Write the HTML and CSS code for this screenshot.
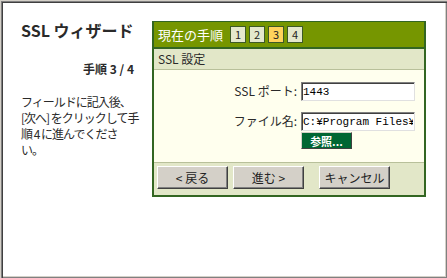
FILE: index.html
```html
<!DOCTYPE html>
<html lang="ja">
<head>
    <meta charset="UTF-8">
    <title>SSL ウィザード</title>
    <link rel="stylesheet" href="styles.css">
</head>
<body>
    <div class="frame">
        <div class="wizard">
            <div class="side">
                <h1>SSL ウィザード</h1>
                <p class="step-count">手順 3 / 4</p>
                <p class="hint">フィールドに記入後、<br>[次へ] をクリックして手<br>順 4 に進んでくださ<br>い。</p>
            </div>

            <div class="panel">
                <div class="panel-head">
                    <span class="head-title">現在の手順</span>
                    <span class="step">1</span>
                    <span class="step">2</span>
                    <span class="step current">3</span>
                    <span class="step">4</span>
                </div>
                <div class="panel-sub">SSL 設定</div>
                <div class="panel-body">
                    <div class="field">
                        <label for="port">SSL ポート:</label>
                        <input type="text" id="port" value="1443">
                    </div>
                    <div class="field">
                        <label for="file">ファイル名:</label>
                        <div class="file-col">
                            <input type="text" id="file" value="C:¥Program Files¥Apache">
                            <button class="browse" type="button">参照...</button>
                        </div>
                    </div>
                </div>
                <div class="panel-foot">
                    <button class="btn" type="button">&lt; 戻る</button>
                    <button class="btn" type="button">進む &gt;</button>
                    <button class="btn cancel" type="button">キャンセル</button>
                </div>
            </div>
        </div>
    </div>
</body>
</html>
```

FILE: styles.css
```css
html, body {
    margin: 0;
    padding: 0;
}

body {
    font-family: "Noto Sans CJK JP", "DejaVu Sans", sans-serif;
    font-size: 12px;
    color: #2a2a2a;
    background-color: #d4d0c8;
}

.frame {
    width: 447px;
    height: 278px;
    box-sizing: border-box;
    border-top: 1px solid #d4d0c8;
    border-left: 1px solid #d4d0c8;
    background-color: #fff;
    box-shadow: inset 1px 1px 0 #808080, inset 2px 2px 0 #404040, inset -1px -1px 0 #808080, inset -2px -2px 0 #d4d0c8, inset -3px -3px 0 #fff;
    padding: 20px 0 0 19px;
}

.wizard {
    display: flex;
    align-items: flex-start;
}

.side {
    width: 114px;
    margin-right: 18px;
}

h1 {
    font-size: 16px;
    font-weight: bold;
    margin: 0 0 0 1px;
    line-height: 18px;
    color: #2a2a2a;
}

.step-count {
    text-align: right;
    font-weight: bold;
    margin: 22px 0 0;
    line-height: 16px;
}

.hint {
    margin: 17px 0 0 1px;
    line-height: 16px;
    letter-spacing: -1px;
    white-space: nowrap;
}

.panel {
    width: 274px;
    border: 2px solid #336622;
    border-top-width: 1px;
    box-sizing: border-box;
}

.panel-head {
    background-color: #769600;
    height: 25px;
    display: flex;
    align-items: center;
    padding-left: 4px;
    border-bottom: 2px solid #336622;
}

.head-title {
    color: #fff;
    font-size: 13px;
    margin-right: 7px;
}

.step {
    width: 14px;
    height: 15px;
    line-height: 15px;
    text-align: center;
    font-size: 11px;
    background-color: #e4e8cc;
    border: 1px solid #3c5a28;
    margin-right: 3px;
    color: #222;
}

.step.current {
    background-color: #ffd35c;
}

.panel-sub {
    background-color: #e2e7c8;
    height: 20px;
    line-height: 20px;
    padding-left: 4px;
    font-size: 12px;
    border-bottom: 1px solid #b8c09a;
}

.panel-body {
    background-color: #ffffee;
    padding: 12px 8px 13px 0;
    display: flex;
    flex-direction: column;
    gap: 11px;
}

.field {
    display: flex;
    align-items: flex-start;
}

.field label {
    width: 143px;
    text-align: right;
    padding-right: 4px;
    line-height: 18px;
}

.file-col {
    display: flex;
    flex-direction: column;
}

input[type="text"] {
    width: 114px;
    height: 19px;
    box-sizing: border-box;
    margin: 0;
    padding: 0 1px;
    font-family: "Liberation Mono", monospace;
    font-size: 11px;
    border: 1px solid;
    border-color: #808080 #e0e0e0 #e0e0e0 #808080;
    box-shadow: inset 1px 1px 0 #404040;
    background-color: #fff;
    color: #000;
}

.browse {
    width: 51px;
    height: 17px;
    margin-top: 1px;
    padding: 0;
    font-family: inherit;
    font-size: 11px;
    font-weight: bold;
    color: #fff;
    background-color: #006633;
    border: 1px solid;
    border-color: #d4d0c8 #404040 #404040 #d4d0c8;
}

.panel-foot {
    background-color: #e2e7c8;
    border-top: 1px solid #b8c09a;
    padding: 3px 3px 6px;
    display: flex;
}

.btn {
    width: 71px;
    height: 23px;
    margin-right: 5px;
    padding: 0;
    font-family: inherit;
    font-size: 12px;
    color: #222;
    background-color: #d4d0c8;
    border: 1px solid;
    border-color: #fff #404040 #404040 #fff;
    box-shadow: inset -1px -1px 0 #808080;
}

.btn.cancel {
    margin-left: 10px;
}
```
